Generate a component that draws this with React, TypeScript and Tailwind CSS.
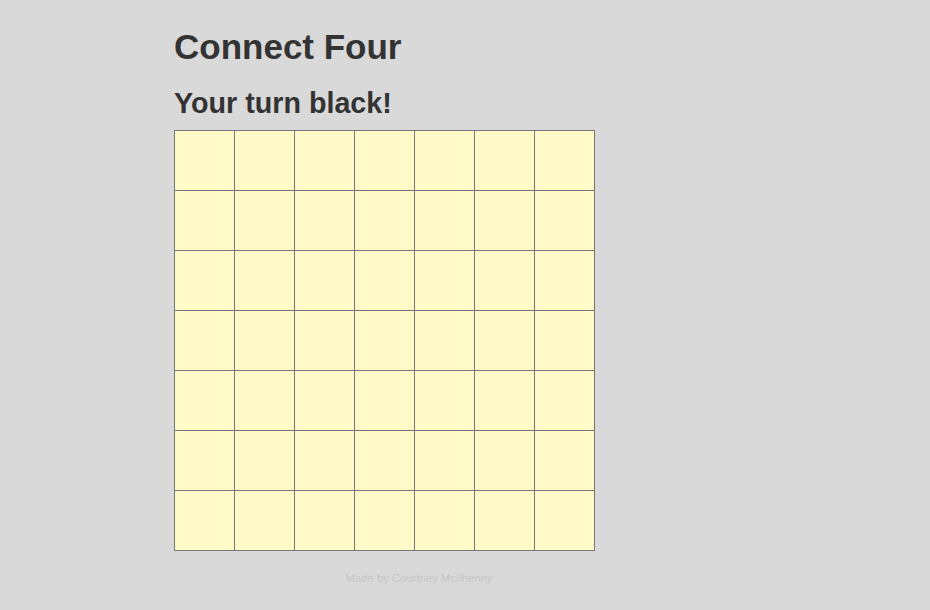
import React from "react";

export default function App() {
  const rows = 7;
  const cols = 7;
  const cells = Array.from({ length: rows * cols });
  return (
    <div
      className="min-h-[610px] w-full bg-[#d9d9d9] pl-[174px] pt-[27px] text-[#333333]"
      style={{ fontFamily: '"Liberation Sans", Arial, Helvetica, sans-serif' }}
    >
      <h1 className="m-0 text-[35px] font-bold leading-[40px]">Connect Four</h1>
      <h2 className="m-0 mt-[20px] text-[28.7px] font-bold leading-[32px]">Your turn black!</h2>
      <div className="mt-[11px] grid w-[421px] grid-cols-7 gap-px border border-[#777777] bg-[#777777]">
        {cells.map((_, i) => (
          <div key={i} className="h-[59px] w-[59px] bg-[#fffac8]" />
        ))}
      </div>
      <div className="mt-[20px] w-[490px] text-center text-[11.3px] leading-[14px] text-[#c6c6c6]">
        Made by Courtney McIlhenny
      </div>
    </div>
  );
}
